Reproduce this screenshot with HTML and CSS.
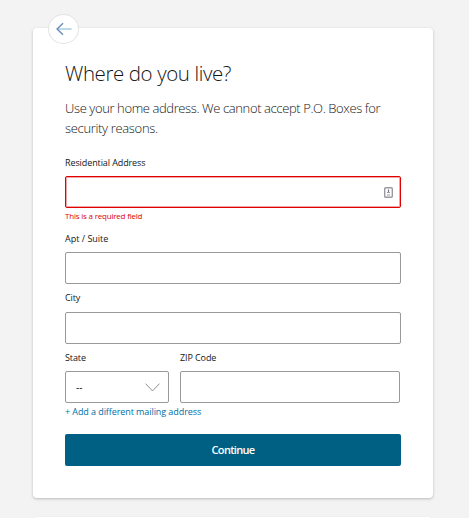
FILE: index.html
```html
<!DOCTYPE html>
<html lang="en">
<head>
<meta charset="utf-8">
<title>Where do you live?</title>
<link rel="stylesheet" href="styles.css">
</head>
<body>
<main class="card">
  <button class="back" type="button" aria-label="Back">
    <svg width="16" height="14" viewBox="0 0 16 14" fill="none"><path class="shaft" d="M2 7H15.5"/><path class="head" d="M7 1.3L1 7L7 12.7"/></svg>
  </button>
  <h1 class="title"><span>Where do you live?</span></h1>
  <p class="intro"><span class="intro-first">Use your home address. We cannot accept P.O. Boxes for</span><br><span class="intro-second">security reasons.</span></p>
  <form>
    <div class="field">
      <label class="label label-address" for="address">Residential Address</label>
      <div class="box box-error" id="address">
        <svg width="9" height="11" viewBox="0 0 9 11" fill="none"><rect x=".7" y=".7" width="7.6" height="9.6" rx="1" stroke="#99999f" stroke-width="1.4"/><path d="M4.5 2.5V6" stroke="#777788" stroke-width="1.2"/><path d="M3 5.5H6M3 8H6" stroke="#99999f"/></svg>
      </div>
      <div class="error"><span>This is a required field</span></div>
    </div>
    <div class="field field-suite">
      <label class="label label-suite">Apt / Suite</label>
      <div class="box"></div>
    </div>
    <div class="field field-city">
      <label class="label label-city">City</label>
      <div class="box"></div>
    </div>
    <div class="row">
      <div class="field">
        <label class="label label-state">State</label>
        <div class="box select"><span>--</span>
          <svg width="15" height="9" viewBox="0 0 15 9" fill="none"><path d="M.5 .6L7.5 7.9L14.5 .6" stroke="#8b8f93"/></svg>
        </div>
      </div>
      <div class="field">
        <label class="label label-zip">ZIP Code</label>
        <div class="box"></div>
      </div>
    </div>
    <a class="link"><span>+ Add a different mailing address</span></a>
    <button class="submit" type="button"><span>Continue</span></button>
  </form>
</main>
<section class="next"></section>
</body>
</html>
```
FILE: styles.css
```css
* { box-sizing: border-box; }
body {
  margin: 0;
  height: 518px;
  overflow: hidden;
  padding: 28px 36px 0 33px;
  background: #f3f3f3;
  color: #151515;
  font-family: "Open Sans", "Noto Sans", sans-serif;
}
.card {
  position: relative;
  width: 400px;
  height: 470px;
  padding: 32px 32px 0;
  border-radius: 4px;
  background: #fff;
  box-shadow: 0 1px 3px rgba(0, 0, 0, .24);
}
.back {
  position: absolute;
  left: 15px;
  top: -14px;
  width: 31px;
  height: 30px;
  padding: 0;
  display: flex;
  align-items: center;
  justify-content: center;
  border: 1px solid #e3e3e3;
  border-radius: 50%;
  background: #fff;
}
.shaft { stroke: #b5d5e5; stroke-width: 1.8; }
.head { stroke: #6688b8; stroke-width: 1.3; }
.title { margin: 0; height: 28px; font-size: 20.5px; line-height: 27px; font-weight: 300; letter-spacing: -.4px; white-space: nowrap; }
.intro { margin: 10px 0 0; height: 40px; font-size: 13px; line-height: 20px; font-weight: 300; letter-spacing: -.39px; white-space: nowrap; }
.intro-second { letter-spacing: -.33px; }
.label { display: block; height: 20px; padding-top: 1px; font-size: 9px; line-height: 12px; letter-spacing: -.1px; }
.label-suite { letter-spacing: 0; }
.label-city { padding-top: 0; }
form { padding-top: 18px; }
.box {
  height: 32px;
  border: 1px solid #999;
  border-radius: 2px;
  display: flex;
  align-items: center;
}
.box-error { justify-content: flex-end; padding-right: 7px; border: 1px solid #e00000; box-shadow: inset 0 0 0 1px #f1a5a5; }
.error { height: 12px; padding-top: 2px; color: #e00000; font-size: 8px; line-height: 12px; letter-spacing: -.2px; }
.field-suite { padding-top: 12px; }
.field-city { padding-top: 8px; }
.row { display: grid; grid-template-columns: 104px 220px; gap: 11px; padding-top: 7px; }
.select { justify-content: space-between; padding: 0 8px 0 10px; font-size: 10px; }
.link { display: block; height: 31px; padding-top: 3px; color: #0070a8; font-size: 9px; line-height: 12px; letter-spacing: -.08px; white-space: nowrap; }
.submit {
  display: block;
  width: 336px;
  height: 32px;
  padding: 0;
  border: 0;
  border-radius: 2px;
  background: #006083;
  color: #fff;
  font: 600 11px/32px "Open Sans", sans-serif;
  letter-spacing: -.7px;
}
.next { width: 400px; height: 20px; margin-top: 19px; border-radius: 4px; background: #fff; box-shadow: 0 0 1px rgba(0, 0, 0, .15); }
```
